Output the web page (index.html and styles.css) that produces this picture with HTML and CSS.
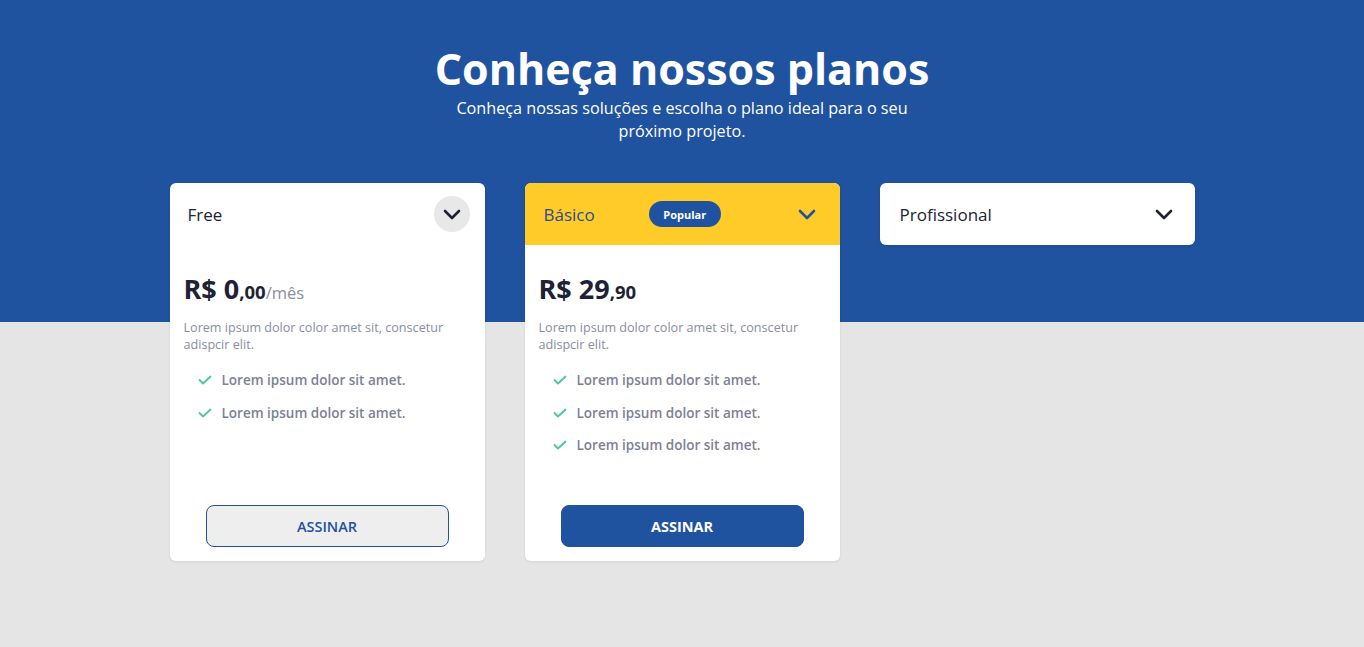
FILE: index.html
```html
<!DOCTYPE html>
<html lang="pt-BR">
<head>
<meta charset="utf-8">
<title>Planos</title>
<link rel="stylesheet" href="styles.css">
</head>
<body>
<main class="page">
  <header class="intro">
    <h1 class="title">Conheça nossos planos</h1>
    <p class="subtitle">Conheça nossas soluções e escolha o plano ideal para o seu próximo projeto.</p>
  </header>
  <section class="plans">
    <article class="card">
      <div class="card-head">
        <span class="plan-name">Free</span>
        <span class="toggle toggle-round">
          <svg width="18" height="11" viewBox="0 0 18 11"><path d="M2 2 L9 9 L16 2" fill="none" stroke="#1e2235" stroke-width="2.6" stroke-linecap="round" stroke-linejoin="round"/></svg>
        </span>
      </div>
      <div class="card-body">
        <div class="price"><span class="price-main">R$ 0</span><span class="price-cents">,00</span><span class="price-period">/mês</span></div>
        <p class="desc">Lorem ipsum dolor color amet sit, conscetur adispcir elit.</p>
        <ul class="features">
          <li><svg class="check" width="14" height="10" viewBox="0 0 14 10"><path d="M1.5 5 L5 8.5 L12.5 1.5" fill="none" stroke="#4cc79a" stroke-width="1.8" stroke-linecap="round" stroke-linejoin="round"/></svg>Lorem ipsum dolor sit amet.</li>
          <li><svg class="check" width="14" height="10" viewBox="0 0 14 10"><path d="M1.5 5 L5 8.5 L12.5 1.5" fill="none" stroke="#4cc79a" stroke-width="1.8" stroke-linecap="round" stroke-linejoin="round"/></svg>Lorem ipsum dolor sit amet.</li>
        </ul>
        <button class="btn btn-outline">ASSINAR</button>
      </div>
    </article>
    <article class="card">
      <div class="card-head card-head-featured">
        <span class="plan-name plan-name-featured">Básico</span>
        <span class="badge">Popular</span>
        <span class="toggle">
          <svg width="18" height="11" viewBox="0 0 18 11"><path d="M2 2 L9 9 L16 2" fill="none" stroke="#1f529f" stroke-width="2.6" stroke-linecap="round" stroke-linejoin="round"/></svg>
        </span>
      </div>
      <div class="card-body">
        <div class="price"><span class="price-main">R$ 29</span><span class="price-cents">,90</span></div>
        <p class="desc">Lorem ipsum dolor color amet sit, conscetur adispcir elit.</p>
        <ul class="features">
          <li><svg class="check" width="14" height="10" viewBox="0 0 14 10"><path d="M1.5 5 L5 8.5 L12.5 1.5" fill="none" stroke="#4cc79a" stroke-width="1.8" stroke-linecap="round" stroke-linejoin="round"/></svg>Lorem ipsum dolor sit amet.</li>
          <li><svg class="check" width="14" height="10" viewBox="0 0 14 10"><path d="M1.5 5 L5 8.5 L12.5 1.5" fill="none" stroke="#4cc79a" stroke-width="1.8" stroke-linecap="round" stroke-linejoin="round"/></svg>Lorem ipsum dolor sit amet.</li>
          <li><svg class="check" width="14" height="10" viewBox="0 0 14 10"><path d="M1.5 5 L5 8.5 L12.5 1.5" fill="none" stroke="#4cc79a" stroke-width="1.8" stroke-linecap="round" stroke-linejoin="round"/></svg>Lorem ipsum dolor sit amet.</li>
        </ul>
        <button class="btn btn-solid">ASSINAR</button>
      </div>
    </article>
    <article class="card card-collapsed">
      <div class="card-head">
        <span class="plan-name">Profissional</span>
        <span class="toggle">
          <svg width="18" height="11" viewBox="0 0 18 11"><path d="M2 2 L9 9 L16 2" fill="none" stroke="#1e2235" stroke-width="2.6" stroke-linecap="round" stroke-linejoin="round"/></svg>
        </span>
      </div>
    </article>
  </section>
</main>
</body>
</html>
```
FILE: styles.css
```css
* { box-sizing: border-box; }
html, body { margin: 0; padding: 0; }
body {
  font-family: "Open Sans", "Noto Sans", sans-serif;
  background: linear-gradient(to bottom, #1f529f 0, #1f529f 322px, #e5e5e5 322px, #e5e5e5 100%);
  min-height: 647px;
}
.page { padding-top: 45px; }
.intro { text-align: center; color: #fff; }
.title {
  margin: 0;
  font-size: 43px;
  line-height: 48px;
  font-weight: 700;
}
.subtitle {
  margin: 4px auto 0;
  width: 470px;
  font-size: 16.2px;
  line-height: 23px;
}
.plans {
  margin-top: 40px;
  display: flex;
  justify-content: center;
  align-items: flex-start;
  gap: 40px;
}
.card {
  width: 315px;
  background: #fff;
  border-radius: 6px;
  overflow: hidden;
  box-shadow: 0 1px 3px rgba(0,0,0,0.08);
  display: flex;
  flex-direction: column;
}
.card-head {
  height: 62px;
  display: flex;
  align-items: center;
  justify-content: space-between;
  padding: 0 15px 0 18px;
}
.card-head-featured { background: #ffcb29; padding-left: 19px; }
.card-collapsed .card-head { padding-left: 20px; padding-right: 13px; }
.plan-name { font-size: 17px; font-weight: 500; color: #1e2235; }
.plan-name-featured { color: #2f4c8f; }
.badge {
  margin-left: 54px;
  margin-right: auto;
  width: 72px;
  height: 26px;
  border-radius: 13px;
  background: #1f529f;
  color: #fff;
  font-size: 11px;
  font-weight: 700;
  display: flex;
  align-items: center;
  justify-content: center;
}
.toggle {
  width: 36px;
  height: 36px;
  display: flex;
  align-items: center;
  justify-content: center;
  border-radius: 50%;
}
.toggle-round { background: #e8e8e8; }
.card-body {
  padding: 27px 14px 14px;
  min-height: 316px;
  display: flex;
  flex-direction: column;
}
.price { color: #1e2235; font-weight: 700; white-space: nowrap; line-height: 34px; }
.price-main { font-size: 27px; }
.price-cents { font-size: 18.5px; }
.price-period { font-size: 16.5px; font-weight: 400; color: #8a8d9f; }
.desc {
  margin: 9px 0 0;
  font-size: 12.6px;
  line-height: 17px;
  color: #8a8d9f;
  padding-right: 20px;
}
.features {
  list-style: none;
  margin: 11px 0 0;
  padding: 0 0 0 14px;
}
.features li {
  display: flex;
  align-items: center;
  font-size: 13.5px;
  font-weight: 600;
  color: #7d8196;
  line-height: 20px;
  padding: 6.25px 0;
}
.check { margin-right: 10px; flex: none; }
.btn {
  margin: auto auto 0;
  width: 243px;
  height: 42px;
  border-radius: 8px;
  font-family: inherit;
  font-size: 14.5px;
  font-weight: 600;
  cursor: pointer;
}
.btn-outline { background: #eeeeee; border: 1px solid #1f529f; color: #1f529f; }
.btn-solid { background: #1f529f; border: 1px solid #1f529f; color: #fff; font-weight: 700; }
```
